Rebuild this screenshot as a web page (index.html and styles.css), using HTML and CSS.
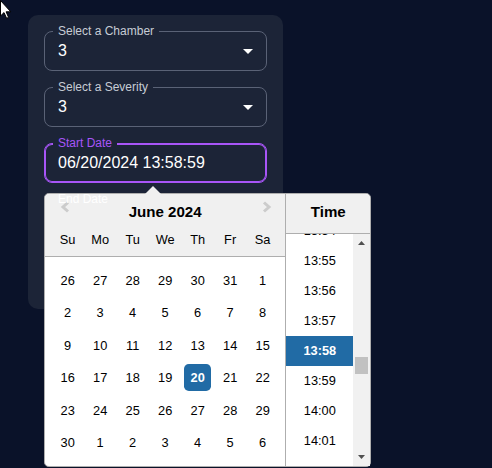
FILE: index.html
```html
<!DOCTYPE html>
<html lang="en">
<head>
<meta charset="utf-8">
<title>Filters</title>
<link rel="stylesheet" href="styles.css">
</head>
<body>
<div class="panel">
  <div class="field">
    <span class="lbl">Select a Chamber</span>
    <span class="val">3</span>
    <svg class="caret" width="10" height="5" viewBox="0 0 10 5"><path d="M0 0h10L5 5z" fill="#fff"/></svg>
  </div>
  <div class="field">
    <span class="lbl">Select a Severity</span>
    <span class="val">3</span>
    <svg class="caret" width="10" height="5" viewBox="0 0 10 5"><path d="M0 0h10L5 5z" fill="#fff"/></svg>
  </div>
  <div class="picker-wrap">
    <div class="field focus">
      <span class="lbl">Start Date</span>
      <span class="val">06/20/2024 13:58:59</span>
    </div>
    <div class="popup">
      <svg class="tri" width="18" height="10" viewBox="0 0 18 10"><polygon points="0,10 9,1 18,10" fill="#f0f0f0"/></svg>
      <div class="month-col">
        <div class="hdr">
          <svg class="nav prev" width="10" height="12" viewBox="0 0 10 12"><polyline points="8,1.5 3,6 8,10.5" fill="none" stroke="#ccc" stroke-width="3"/></svg>
          <div class="title">June 2024</div>
          <div class="dnames"><span>Su</span><span>Mo</span><span>Tu</span><span>We</span><span>Th</span><span>Fr</span><span>Sa</span></div>
          <svg class="nav next" width="10" height="12" viewBox="0 0 10 12"><polyline points="2,1.5 7,6 2,10.5" fill="none" stroke="#ccc" stroke-width="3"/></svg>
        </div>
        <div class="month">
          <div class="week"><span class="day">26</span><span class="day">27</span><span class="day">28</span><span class="day">29</span><span class="day">30</span><span class="day">31</span><span class="day">1</span></div>
          <div class="week"><span class="day">2</span><span class="day">3</span><span class="day">4</span><span class="day">5</span><span class="day">6</span><span class="day">7</span><span class="day">8</span></div>
          <div class="week"><span class="day">9</span><span class="day">10</span><span class="day">11</span><span class="day">12</span><span class="day">13</span><span class="day">14</span><span class="day">15</span></div>
          <div class="week"><span class="day">16</span><span class="day">17</span><span class="day">18</span><span class="day">19</span><span class="day sel">20</span><span class="day">21</span><span class="day">22</span></div>
          <div class="week"><span class="day">23</span><span class="day">24</span><span class="day">25</span><span class="day">26</span><span class="day">27</span><span class="day">28</span><span class="day">29</span></div>
          <div class="week"><span class="day">30</span><span class="day">1</span><span class="day">2</span><span class="day">3</span><span class="day">4</span><span class="day">5</span><span class="day">6</span></div>
        </div>
      </div>
      <div class="time-col">
        <div class="thdr">Time</div>
        <div class="tbox">
          <ul class="tlist">
            <li>13:54</li>
            <li>13:55</li>
            <li>13:56</li>
            <li>13:57</li>
            <li class="sel">13:58</li>
            <li>13:59</li>
            <li>14:00</li>
            <li>14:01</li>
            <li>14:02</li>
          </ul>
          <div class="sbar">
            <div class="sbtn"><svg width="7" height="4" viewBox="0 0 7 4"><path d="M0 4L3.5 0L7 4z" fill="#505050"/></svg></div>
            <div class="strack"><div class="thumb"></div></div>
            <div class="sbtn"><svg width="7" height="4" viewBox="0 0 7 4"><path d="M0 0h7L3.5 4z" fill="#505050"/></svg></div>
          </div>
        </div>
      </div>
    </div>
  </div>
  <div class="field end">
    <span class="lbl over">End Date</span>
  </div>
  <div class="spacer"></div>
</div>
<svg class="cursor" width="12" height="19" viewBox="0 0 12 19"><path d="M0.5 0.5L0.5 16L4 12.6L6.6 18.3L8.6 17.4L6.1 11.8L10.8 11.8Z" fill="#fff" stroke="#000" stroke-width="1" stroke-linejoin="round"/></svg>
</body>
</html>
```

FILE: styles.css
```css
html, body {
  margin: 0;
  height: 468px;
  overflow: hidden;
}
body {
  background: #0a1229;
  font-family: "Liberation Sans", Arial, sans-serif;
  padding: 15px 0 0 28px;
  box-sizing: border-box;
}
.panel {
  width: 255px;
  box-sizing: border-box;
  padding: 16px;
  background: #1c2437;
  border-radius: 10px;
  display: flex;
  flex-direction: column;
  gap: 16px;
}
.field {
  position: relative;
  height: 40px;
  box-sizing: border-box;
  border: 1px solid #5a6276;
  border-radius: 8px;
  display: flex;
  align-items: center;
  padding: 0 13px;
}
.lbl {
  position: absolute;
  left: 8px;
  top: -8px;
  padding: 0 5px;
  font-size: 12px;
  line-height: 14px;
  color: #c7ccd5;
  background: #1c2437;
  white-space: nowrap;
}
.val {
  flex: 1;
  font-size: 16px;
  line-height: 20px;
  color: #fff;
}
.caret {
  margin-right: 0;
}
.field.focus {
  border-color: #a855f7;
  box-shadow: inset 0 0 0 1px #a855f7;
}
.field.focus .lbl {
  color: #a855f7;
}
.field.end {
  border-color: transparent;
}
.lbl.over {
  background: transparent;
  color: #fff;
  z-index: 3;
}
.spacer {
  height: 37.5px;
}
.picker-wrap {
  position: relative;
}
.popup {
  position: absolute;
  top: calc(100% + 10px);
  left: 0;
  z-index: 2;
  display: flex;
  background: #fff;
  border: 1px solid #aeaeae;
  border-radius: 4.8px;
  font-size: 12.8px;
  color: #000;
}
.tri {
  position: absolute;
  top: -9px;
  left: 99px;
}
.month-col {
  display: flex;
  flex-direction: column;
}
.hdr {
  position: relative;
  background: #f0f0f0;
  border-bottom: 1px solid #aeaeae;
  border-top-left-radius: 4.8px;
  padding-top: 8px;
  text-align: center;
}
.title {
  font-weight: bold;
  font-size: 15.1px;
  line-height: 20px;
  margin-bottom: 2px;
}
.dnames {
  display: flex;
  justify-content: center;
  height: 32px;
}
.dnames span {
  width: 27.2px;
  margin: 0 2.66px;
  line-height: 32px;
  text-align: center;
}
.nav {
  position: absolute;
  top: 7px;
}
.nav.prev {
  left: 15px;
}
.nav.next {
  left: 217px;
}
.month {
  margin: 7px 6.4px 6.4px;
}
.week {
  display: flex;
}
.day {
  width: 27.2px;
  height: 27.2px;
  line-height: 27.2px;
  margin: 2.66px;
  text-align: center;
  border-radius: 4.8px;
}
.day.sel {
  background: #216ba5;
  color: #fff;
  font-weight: bold;
}
.time-col {
  width: 84px;
  border-left: 1px solid #aeaeae;
  display: flex;
  flex-direction: column;
}
.thdr {
  background: #f0f0f0;
  border-bottom: 1px solid #aeaeae;
  border-top-right-radius: 4.8px;
  padding: 8px 5px 11px;
  font-weight: bold;
  font-size: 15.1px;
  line-height: 20px;
  text-align: center;
}
.tbox {
  height: 231.5px;
  display: flex;
  overflow: hidden;
}
.tlist {
  list-style: none;
  margin: 0;
  padding: 0;
  flex: 1;
  overflow: hidden;
}
.tlist li {
  height: 30px;
  box-sizing: border-box;
  padding: 5px 10px;
  line-height: 20px;
  text-align: center;
  white-space: nowrap;
}
.tlist li:first-child {
  margin-top: -18px;
}
.tlist li.sel {
  background: #216ba5;
  color: #fff;
  font-weight: bold;
}
.sbar {
  width: 17px;
  background: #f1f1f1;
  display: flex;
  flex-direction: column;
}
.sbtn {
  height: 17px;
  display: flex;
  align-items: center;
  justify-content: center;
}
.strack {
  flex: 1;
}
.thumb {
  margin: 106px 2px 0;
  height: 17px;
  background: #c1c1c1;
}
.cursor {
  position: fixed;
  left: 0;
  top: 0;
  z-index: 10;
}
```
